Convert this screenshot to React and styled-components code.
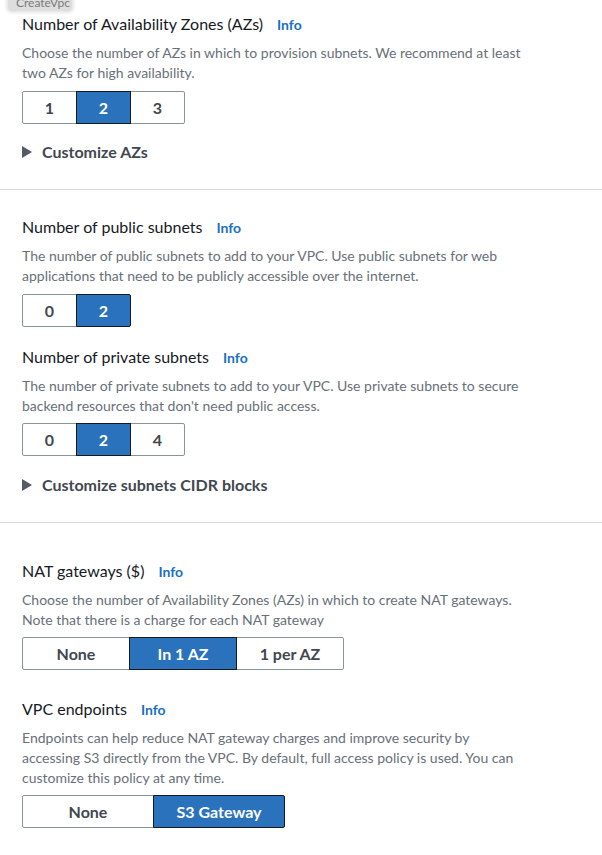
import React from 'react'
import styled, { createGlobalStyle } from 'styled-components'

const Global = createGlobalStyle`
    body {
        margin: 0;
        background: #ffffff;
        font-family: Lato, "Liberation Sans", sans-serif;
        -webkit-font-smoothing: antialiased;
    }
`;

const Page = styled.div`
    width: 602px;
    height: 855px;
    overflow: hidden;
`;

const Tag = styled.div`
    display: flex;
    align-items: flex-end;
    width: 64px;
    height: 11px;
    margin-left: 8px;
    overflow: hidden;
    background: #dedede;
    border-radius: 0 0 4px 4px;
    box-shadow: 0 0 3px 2px #e6e6e6;
    span {
        padding-left: 8px;
        font-size: 12px;
        line-height: 16px;
        color: #7a7a7a;
    }
`;

const Section = styled.section`
    padding: ${p => p.$top}px 22px ${p => p.$bottom}px 22px;
    border-bottom: ${p => (p.$divider ? '1px solid #d5dbdb' : 'none')};
`;

const Field = styled.div`
    margin-top: ${p => p.$top || 0}px;
`;

const Label = styled.div`
    display: flex;
    align-items: baseline;
    gap: 14px;
    font-size: 16px;
    line-height: 22px;
    color: #16191f;
`;

const Info = styled.a`
    font-size: 14px;
    font-weight: 700;
    color: #1a6fc4;
    text-decoration: none;
    cursor: pointer;
`;

const Desc = styled.p`
    max-width: 505px;
    margin: 7px 0 0 0;
    font-size: 14px;
    line-height: 20px;
    color: #687078;
`;

const Group = styled.div`
    display: flex;
    margin-top: ${p => p.$top || 8}px;
`;

const Option = styled.button`
    position: relative;
    z-index: ${p => (p.$active ? 1 : 0)};
    width: ${p => p.$width}px;
    height: 33px;
    box-sizing: border-box;
    margin: 0 0 0 -1px;
    padding: 0;
    border: 1px solid ${p => (p.$active ? '#16191f' : '#879596')};
    background: ${p => (p.$active ? '#2b72bd' : '#ffffff')};
    color: ${p => (p.$active ? '#ffffff' : '#414750')};
    font-family: inherit;
    font-size: 16px;
    font-weight: 700;
    cursor: pointer;
    &:first-child {
        margin-left: 0;
        border-radius: 2px 0 0 2px;
    }
    &:last-child {
        border-radius: 0 2px 2px 0;
    }
`;

const Expander = styled.div`
    display: flex;
    align-items: center;
    gap: 10px;
    margin-top: ${p => p.$top}px;
    font-size: 16px;
    font-weight: 700;
    line-height: 22px;
    color: #414750;
    svg {
        flex: none;
    }
`;

const Segmented = ({ options, selected, width, top }) => (
    <Group $top={top}>
        {options.map(o => (
            <Option key={o} $width={width} $active={o === selected}>{o}</Option>
        ))}
    </Group>
);

const Caret = () => (
    <svg width="10" height="12" viewBox="0 0 10 12">
        <polygon points="0,0 10,6 0,12" fill="#545b64" />
    </svg>
);

const App = () => {
    return (
        <Page>
            <Global />
            <Tag><span>CreateVpc</span></Tag>
            <Section $top={2} $bottom={26} $divider>
                <Field>
                    <Label>Number of Availability Zones (AZs)<Info>Info</Info></Label>
                    <Desc>Choose the number of AZs in which to provision subnets. We recommend at least two AZs for high availability.</Desc>
                    <Segmented options={['1', '2', '3']} selected="2" width={55} />
                </Field>
                <Expander $top={17}><Caret />Customize AZs</Expander>
            </Section>
            <Section $top={26} $bottom={26} $divider>
                <Field>
                    <Label>Number of public subnets<Info>Info</Info></Label>
                    <Desc>The number of public subnets to add to your VPC. Use public subnets for web applications that need to be publicly accessible over the internet.</Desc>
                    <Segmented options={['0', '2']} selected="2" width={55} />
                </Field>
                <Field $top={19}>
                    <Label>Number of private subnets<Info>Info</Info></Label>
                    <Desc>The number of private subnets to add to your VPC. Use private subnets to secure backend resources that don't need public access.</Desc>
                    <Segmented options={['0', '2', '4']} selected="2" width={55} top={7} />
                </Field>
                <Expander $top={18}><Caret />Customize subnets CIDR blocks</Expander>
            </Section>
            <Section $top={37} $bottom={0}>
                <Field>
                    <Label>NAT gateways ($)<Info>Info</Info></Label>
                    <Desc>Choose the number of Availability Zones (AZs) in which to create NAT gateways. Note that there is a charge for each NAT gateway</Desc>
                    <Segmented options={['None', 'In 1 AZ', '1 per AZ']} selected="In 1 AZ" width={108} top={7} />
                </Field>
                <Field $top={28}>
                    <Label>VPC endpoints<Info>Info</Info></Label>
                    <Desc>Endpoints can help reduce NAT gateway charges and improve security by accessing S3 directly from the VPC. By default, full access policy is used. You can customize this policy at any time.</Desc>
                    <Segmented options={['None', 'S3 Gateway']} selected="S3 Gateway" width={132} top={7} />
                </Field>
            </Section>
        </Page>
    )
}

export default App
